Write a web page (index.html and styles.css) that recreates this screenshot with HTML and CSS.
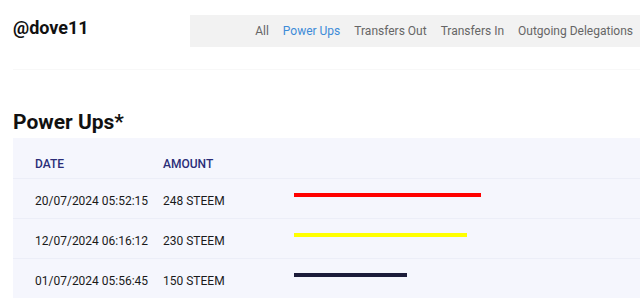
FILE: index.html
```html
<!DOCTYPE html>
<html lang="en">
  <head>
    <meta charset="UTF-8" />
    <title>@dove11 - Power Ups</title>
    <link rel="stylesheet" href="styles.css">
  </head>
  <body>
    <div class="page">
      <div class="top">
        <h1 class="user">@dove11</h1>
        <nav class="tabs">
          <a href="#">All</a>
          <a href="#" class="active">Power Ups</a>
          <a href="#">Transfers Out</a>
          <a href="#">Transfers In</a>
          <a href="#">Outgoing Delegations</a>
        </nav>
      </div>
      <div class="divider"></div>

      <h2 class="section-title">Power Ups*</h2>
      <table class="history">
        <thead>
          <tr>
            <th class="col-date">Date</th>
            <th class="col-amount">Amount</th>
            <th></th>
          </tr>
        </thead>
        <tbody>
          <tr>
            <td>20/07/2024 05:52:15</td>
            <td>248 STEEM</td>
            <td><span class="bar red" style="width: 187px"></span></td>
          </tr>
          <tr>
            <td>12/07/2024 06:16:12</td>
            <td>230 STEEM</td>
            <td><span class="bar yellow" style="width: 173px"></span></td>
          </tr>
          <tr>
            <td>01/07/2024 05:56:45</td>
            <td>150 STEEM</td>
            <td><span class="bar navy" style="width: 113px"></span></td>
          </tr>
        </tbody>
      </table>
    </div>
  </body>
</html>
```

FILE: styles.css
```css
body {
  font-family: Roboto, "Liberation Sans", Arial, sans-serif;
  background: #fff;
  color: #111;
  margin: 0;
}
.page {
  padding: 15px 0 0 13px;
}
.top {
  display: flex;
  align-items: flex-start;
}
.user {
  font-size: 18px;
  font-weight: bold;
  margin: 2px 0 0 0;
  line-height: 22px;
  width: 177px;
}
.tabs {
  flex: 1;
  display: flex;
  justify-content: flex-end;
  gap: 14px;
  background: #f2f2f2;
  height: 32px;
  align-items: center;
  padding-right: 7px;
}
.tabs a {
  font-size: 12px;
  color: #666;
  text-decoration: none;
}
.tabs a.active {
  color: #3d8bd8;
}
.divider {
  border-top: 1px solid #f8f8f8;
  margin-top: 22px;
}
.section-title {
  font-size: 21px;
  font-weight: bold;
  margin: 39px 0 0 0;
  line-height: 26px;
}
.history {
  width: 100%;
  border-collapse: collapse;
  background: #f5f6fd;
  margin-top: 3px;
  font-size: 12px;
}
.history th {
  text-align: left;
  text-transform: uppercase;
  font-weight: 500;
  color: #2a2d78;
  height: 28px;
  padding: 12px 0 0 0;
}
.history td {
  height: 35px;
  padding: 4px 0 0 0;
  border-top: 1px solid #eceef8;
  color: #1a1a1a;
}
.col-date {
  width: 128px;
}
.history th:first-child,
.history td:first-child {
  padding-left: 22px;
}
.col-amount {
  width: 131px;
}
.bar {
  display: block;
  height: 4px;
  margin-bottom: 11px;
}
.red {
  background: #ff0000;
}
.yellow {
  background: #ffff00;
}
.navy {
  background: #1c1c3a;
}
```
